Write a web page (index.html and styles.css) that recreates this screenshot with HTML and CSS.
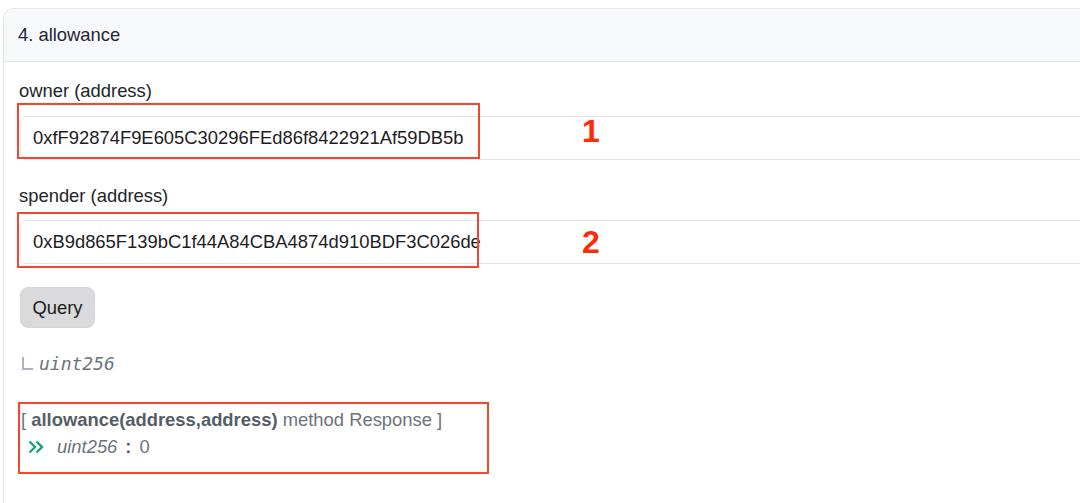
FILE: index.html
```html
<!DOCTYPE html>
<html>
<head>
<meta charset="utf-8">
<link rel="stylesheet" href="styles.css">
</head>
<body>
<div class="page">
  <div class="card">
    <div class="card-header">4. allowance</div>
    <div class="card-body">
      <div class="field">
        <label class="label">owner (address)</label>
        <div class="input-wrap">
          <div class="input">0xfF92874F9E605C30296FEd86f8422921Af59DB5b</div>
          <div class="mark mark-1"></div>
          <div class="num num-1">1</div>
        </div>
      </div>
      <div class="field field-2">
        <label class="label">spender (address)</label>
        <div class="input-wrap">
          <div class="input">0xB9d865F139bC1f44A84CBA4874d910BDF3C026de</div>
          <div class="mark mark-2"></div>
          <div class="num num-2">2</div>
        </div>
      </div>
      <button class="btn">Query</button>
      <div class="ret"><span class="ret-corner"></span><span class="ret-type">uint256</span></div>
      <div class="resp">
        <div class="resp-title">[ <b>allowance(address,address)</b> method Response ]</div>
        <div class="resp-line">
          <svg class="chev" width="16" height="14" viewBox="0 0 16 14"><path d="M1.5 1.5 L7 7 L1.5 12.5 M8.5 1.5 L14 7 L8.5 12.5" fill="none" stroke="#18a083" stroke-width="2.4"/></svg>
          <span class="resp-type">uint256</span><b class="colon">:</b><span class="resp-val">0</span>
        </div>
        <div class="mark mark-3"></div>
      </div>
    </div>
  </div>
</div>
</body>
</html>
```

FILE: styles.css
```css
html, body {
  margin: 0;
  padding: 0;
  background: #ffffff;
  overflow: hidden;
  width: 1080px;
  height: 503px;
}
.page {
  padding: 8px 0 0 3px;
  font-family: "Liberation Sans", Arial, sans-serif;
  width: 1077px;
  height: 495px;
  overflow: hidden;
}
.card {
  width: 1200px;
  height: 560px;
  border: 1px solid #e4e6ea;
  border-radius: 10px;
  overflow: hidden;
  background: #fff;
}
.card-header {
  height: 53px;
  box-sizing: border-box;
  background: #f7f8fa;
  border-bottom: 1px solid #e4e6ea;
  padding: 15px 0 0 14px;
  font-size: 18.4px;
  line-height: 22px;
  color: #1f2733;
}
.card-body {
  padding: 18px 0 0 15px;
}
.label {
  display: block;
  font-size: 18.4px;
  line-height: 22px;
  color: #212529;
  margin-bottom: 14px;
}
.field-2 {
  margin-top: 25px;
}
.field-2 .label {
  margin-bottom: 13px;
}
.input-wrap {
  position: relative;
  padding-left: 1px;
}
.input {
  height: 44px;
  box-sizing: border-box;
  border: 1px solid #e1e4e8;
  border-radius: 6px;
  padding: 10px 12px;
  font-size: 18.4px;
  line-height: 22px;
  color: #1d1d1f;
  background: #fff;
  white-space: nowrap;
}
.mark {
  position: absolute;
  border: 2px solid #f3472d;
  box-sizing: border-box;
}
.mark-1 {
  left: -2px;
  top: -13px;
  width: 463px;
  height: 56px;
}
.mark-2 {
  left: -2px;
  top: -8px;
  width: 462px;
  height: 56px;
}
.num {
  position: absolute;
  left: 563px;
  font-weight: bold;
  font-size: 32px;
  line-height: 32px;
  color: #ff2a0a;
}
.num-1 { top: -1px; }
.num-2 { top: 6px; }
.btn {
  display: block;
  margin: 23px 0 0 1px;
  width: 75px;
  height: 41px;
  border: 1px solid #d6d6d8;
  border-radius: 8px;
  background: #dadadc;
  font-family: "Liberation Sans", Arial, sans-serif;
  font-size: 18.4px;
  color: #1a1a1a;
  padding: 0;
}
.ret {
  display: flex;
  align-items: center;
  margin: 24px 0 0 2px;
  height: 22px;
}
.ret-corner {
  display: inline-block;
  width: 9px;
  height: 11px;
  border-left: 2px solid #aab3bf;
  border-bottom: 2px solid #aab3bf;
  margin: 1px 6px 0 1px;
}
.ret-type {
  font-family: "DejaVu Sans Mono", monospace;
  font-style: italic;
  font-size: 18px;
  color: #6c737c;
}
.resp {
  position: relative;
  margin: 28px 0 0 2px;
  padding-top: 7px;
  height: 72px;
  box-sizing: border-box;
}
.resp-title {
  font-size: 18.4px;
  line-height: 22px;
  color: #6c737c;
}
.resp-title b {
  color: #555d68;
}
.resp-line {
  display: flex;
  align-items: center;
  margin-top: 5px;
  font-size: 18.4px;
  line-height: 22px;
  color: #6c737c;
}
.chev {
  margin: 0 13px 0 7px;
}
.resp-type {
  font-style: italic;
}
.colon {
  margin: 0 8px 0 8px;
  color: #555d68;
}
.resp-val {
  color: #6c737c;
}
.mark-3 {
  left: -3px;
  top: 0;
  width: 471px;
  height: 72px;
}
```
